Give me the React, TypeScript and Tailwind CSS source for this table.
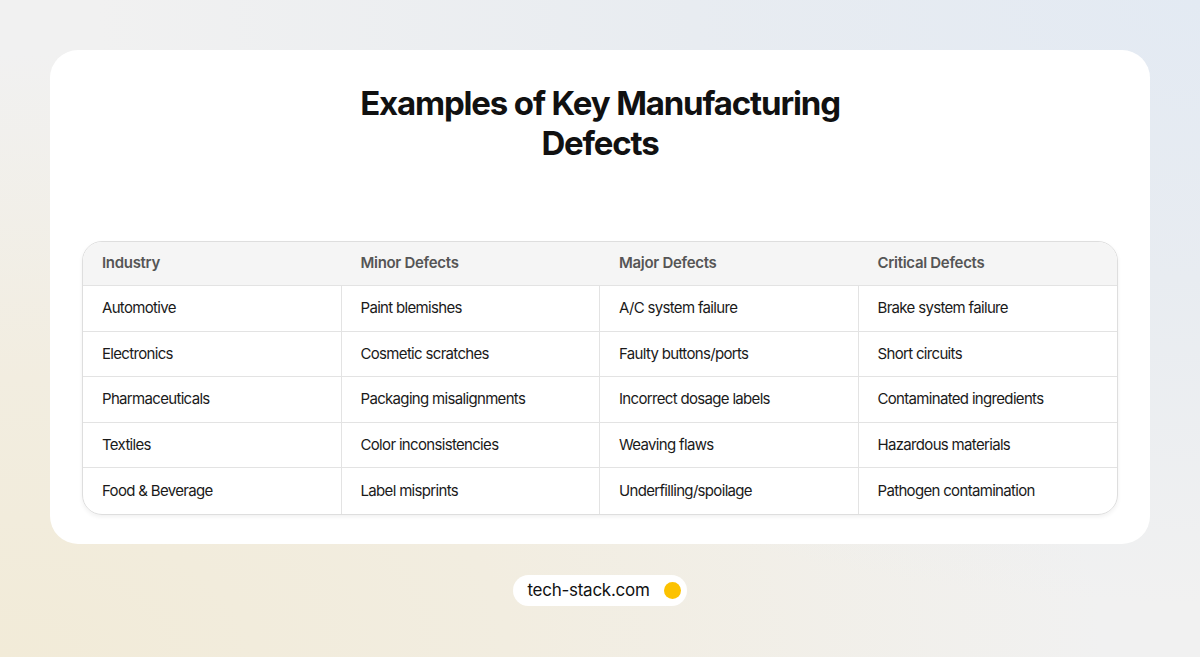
const rows = [
  ["Automotive", "Paint blemishes", "A/C system failure", "Brake system failure"],
  ["Electronics", "Cosmetic scratches", "Faulty buttons/ports", "Short circuits"],
  ["Pharmaceuticals", "Packaging misalignments", "Incorrect dosage labels", "Contaminated ingredients"],
  ["Textiles", "Color inconsistencies", "Weaving flaws", "Hazardous materials"],
  ["Food & Beverage", "Label misprints", "Underfilling/spoilage", "Pathogen contamination"],
];

const headers = ["Industry", "Minor Defects", "Major Defects", "Critical Defects"];

export default function App() {
  return (
    <div
      className="w-[1200px] h-[657px] overflow-hidden bg-[#f1f1f1] bg-[radial-gradient(ellipse_at_100%_0%,#e3eaf3_0%,#e8ecf1_30%,rgba(241,241,241,0)_65%),radial-gradient(ellipse_at_0%_100%,#f2ebd8_0%,#f2ede0_30%,rgba(241,241,241,0)_65%)] pt-[50px] px-[50px] flex flex-col items-center"
      style={{ fontFamily: "Inter, 'Noto Sans', sans-serif" }}
    >
      <div className="w-full h-[494px] bg-white rounded-[28px] pt-[33px] px-[32px] flex flex-col">
        <h1 className="text-center text-[33px] leading-[40px] font-bold tracking-[-0.035em] text-[#111] mx-auto w-[540px]">
          Examples of Key Manufacturing Defects
        </h1>
        <div className="mt-[78px] border border-[#dedede] rounded-[20px] overflow-hidden shadow-[0_2px_4px_rgba(0,0,0,0.06)]">
          <div className="grid grid-cols-4 bg-[#f5f5f5] h-[44px] items-center border-b border-[#e3e3e3]">
            {headers.map((h) => (
              <div key={h} className="pl-[19px] text-[15px] font-semibold text-[#555] tracking-[-0.02em]">
                {h}
              </div>
            ))}
          </div>
          {rows.map((r, i) => (
            <div
              key={r[0]}
              className={`grid grid-cols-4 h-[45.5px] ${i < rows.length - 1 ? "border-b border-[#e3e3e3]" : ""}`}
            >
              {r.map((c, j) => (
                <div
                  key={j}
                  className={`pl-[19px] flex items-center text-[15px] text-[#1a1a1a] tracking-[-0.045em] ${j < 3 ? "border-r border-[#e3e3e3]" : ""}`}
                >
                  {c}
                </div>
              ))}
            </div>
          ))}
        </div>
      </div>
      <div className="mt-[31px] h-[31px] bg-white rounded-full flex items-center pl-[14px] pr-[6px] gap-[14px]">
        <span className="text-[17px] text-[#111] tracking-[-0.015em]">tech-stack.com</span>
        <span className="w-[17px] h-[17px] rounded-full bg-[#fcc200]" />
      </div>
    </div>
  );
}
